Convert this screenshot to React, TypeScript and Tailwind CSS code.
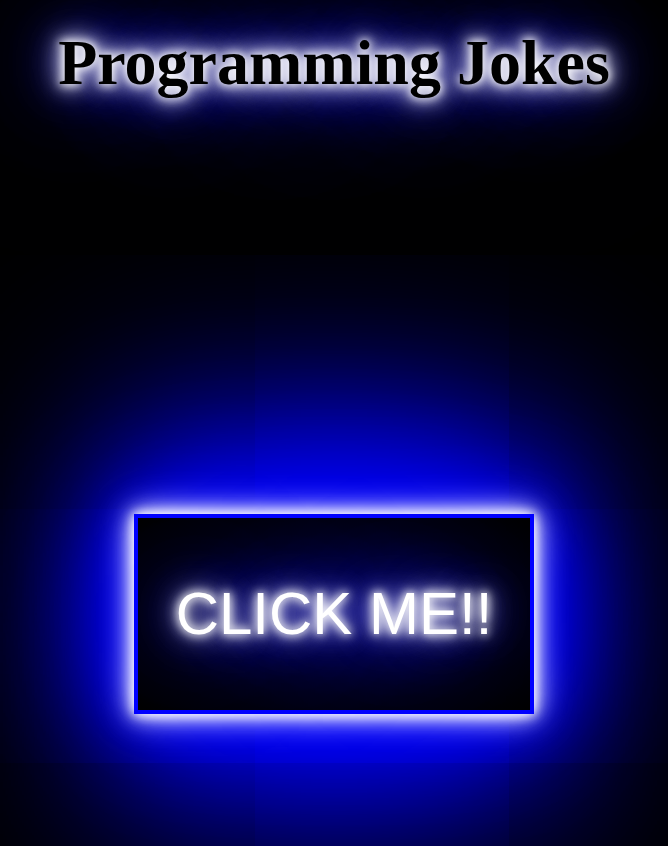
export default function App() {
  return (
    <div className="min-h-[846px] w-full bg-black overflow-hidden flex flex-col items-center">
      {/* Title */}
      <h1 className="mt-[26px] text-[64px] leading-[74px] font-bold text-black font-['Liberation_Serif',serif] [text-shadow:0_0_8px_#fff,0_0_14px_#fff,0_0_22px_#eef,0_0_32px_#bbf,0_0_50px_#44f,0_0_80px_#00f,0_0_120px_#00f,0_0_160px_#00f,0_0_220px_#00f]">
        Programming Jokes
      </h1>

      {/* Button */}
      <button className="mt-[414px] w-[400px] h-[200px] border-4 border-[#0000ff] bg-[radial-gradient(ellipse_at_center,#0c0c4a_0%,#05052a_35%,#000010_70%,#000_100%)] flex items-center justify-center shadow-[0_0_10px_#fff,0_0_18px_#fff,0_0_28px_#ddf,0_0_40px_#66f,0_0_60px_#00f,0_0_100px_#00f,0_40px_160px_#00f,0_-40px_160px_#00f,0_80px_220px_#00f,0_-80px_220px_#00f] text-white text-[60px] font-['Liberation_Sans',Arial,sans-serif] [text-shadow:0_0_8px_#fff,0_0_14px_#fff,0_0_24px_#ddf,0_0_40px_#66f,0_0_70px_#00f,0_0_110px_#00f,0_0_160px_#00f]">
        CLICK ME!!
      </button>
    </div>
  );
}
